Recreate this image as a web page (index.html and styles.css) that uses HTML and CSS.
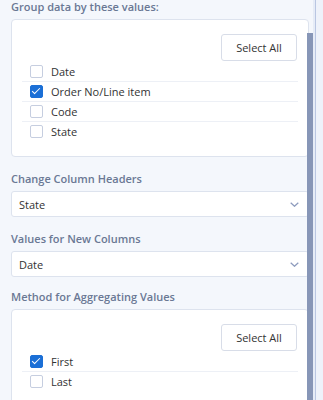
FILE: index.html
```html
<!DOCTYPE html>
<html lang="en">
<head>
    <meta charset="UTF-8">
    <title>Pivot Settings</title>
    <link rel="stylesheet" href="styles.css">
</head>
<body>
    <div class="layout">
        <div class="panel">
            <div class="field">
                <div class="field-label">Group data by these values:</div>
                <div class="list-box">
                    <div class="list-actions">
                        <button class="select-all">Select All</button>
                    </div>
                    <ul class="check-list">
                        <li><span class="check"></span>Date</li>
                        <li><span class="check checked"></span>Order No/Line item</li>
                        <li><span class="check"></span>Code</li>
                        <li><span class="check"></span>State</li>
                    </ul>
                </div>
            </div>

            <div class="field">
                <div class="field-label">Change Column Headers</div>
                <div class="select">
                    <span>State</span>
                    <svg class="chevron" width="9" height="5" viewBox="0 0 9 5"><path d="M0.7 0.7l3.8 3.6 3.8-3.6" fill="none" stroke="#8d9bbd" stroke-width="1.2"/></svg>
                </div>
            </div>

            <div class="field field-tight">
                <div class="field-label">Values for New Columns</div>
                <div class="select">
                    <span>Date</span>
                    <svg class="chevron" width="9" height="5" viewBox="0 0 9 5"><path d="M0.7 0.7l3.8 3.6 3.8-3.6" fill="none" stroke="#8d9bbd" stroke-width="1.2"/></svg>
                </div>
            </div>

            <div class="field">
                <div class="field-label">Method for Aggregating Values</div>
                <div class="list-box">
                    <div class="list-actions">
                        <button class="select-all">Select All</button>
                    </div>
                    <ul class="check-list">
                        <li><span class="check checked"></span>First</li>
                        <li><span class="check"></span>Last</li>
                    </ul>
                </div>
            </div>

            <div class="scrollbar"></div>
        </div>
        <div class="divider"></div>
        <div class="side"></div>
    </div>
</body>
</html>
```

FILE: styles.css
```css
body {
    margin: 0;
    font-family: "Open Sans", "Noto Sans", Arial, sans-serif;
    font-size: 11px;
    color: #333;
    background-color: #f4f7fc;
}

.layout {
    display: flex;
    height: 400px;
    overflow: hidden;
}

.panel {
    position: relative;
    width: 302px;
    margin-top: -1px;
    padding-left: 11px;
    flex-shrink: 0;
}

.field {
    margin-bottom: 14px;
}

.field-tight {
    margin-bottom: 12px;
}

.field-label {
    height: 16px;
    line-height: 16px;
    margin-bottom: 4px;
    font-weight: 600;
    color: #6a7894;
}

.list-box {
    width: 296px;
    background-color: #fff;
    border: 1px solid #dde3ee;
    border-radius: 4px;
    padding: 14px 0 15px 0;
}

.list-actions {
    display: flex;
    justify-content: flex-end;
    padding-right: 11px;
    margin-bottom: 1px;
}

.select-all {
    width: 76px;
    height: 27px;
    padding: 0;
    background-color: #fff;
    border: 1px solid #d8dde8;
    border-radius: 3px;
    font-family: inherit;
    font-size: 11px;
    color: #333;
}

.check-list {
    list-style: none;
    margin: 0 10px 0 10px;
    padding: 0;
}

.check-list li {
    display: flex;
    align-items: center;
    height: 19px;
    padding-left: 8px;
    border-bottom: 1px solid #edf0f6;
}

.check-list li:last-child {
    border-bottom: none;
}

.check {
    width: 11px;
    height: 11px;
    margin-right: 8px;
    border: 1px solid #c6cee0;
    border-radius: 2px;
    background-color: #fff;
}

.check.checked {
    position: relative;
    background-color: #1b6fd6;
    border-color: #1b6fd6;
}

.check.checked::after {
    content: "";
    position: absolute;
    left: 3px;
    top: 0;
    width: 3px;
    height: 7px;
    border: solid #fff;
    border-width: 0 1.5px 1.5px 0;
    transform: rotate(45deg);
}

.select {
    display: flex;
    align-items: center;
    justify-content: space-between;
    box-sizing: border-box;
    width: 298px;
    height: 26px;
    padding: 0 9px 0 7px;
    background-color: #fff;
    border: 1px solid #dde3ee;
    border-radius: 3px;
}

.scrollbar {
    position: absolute;
    left: 307px;
    top: 34px;
    bottom: 0;
    width: 6px;
    background-color: #8796b7;
}

.divider {
    width: 2px;
    flex-shrink: 0;
    background-color: #e6ecf7;
}

.side {
    flex: 1;
    border-left: 1px solid #b9c6e2;
    background-color: #eef2fa;
}
```
